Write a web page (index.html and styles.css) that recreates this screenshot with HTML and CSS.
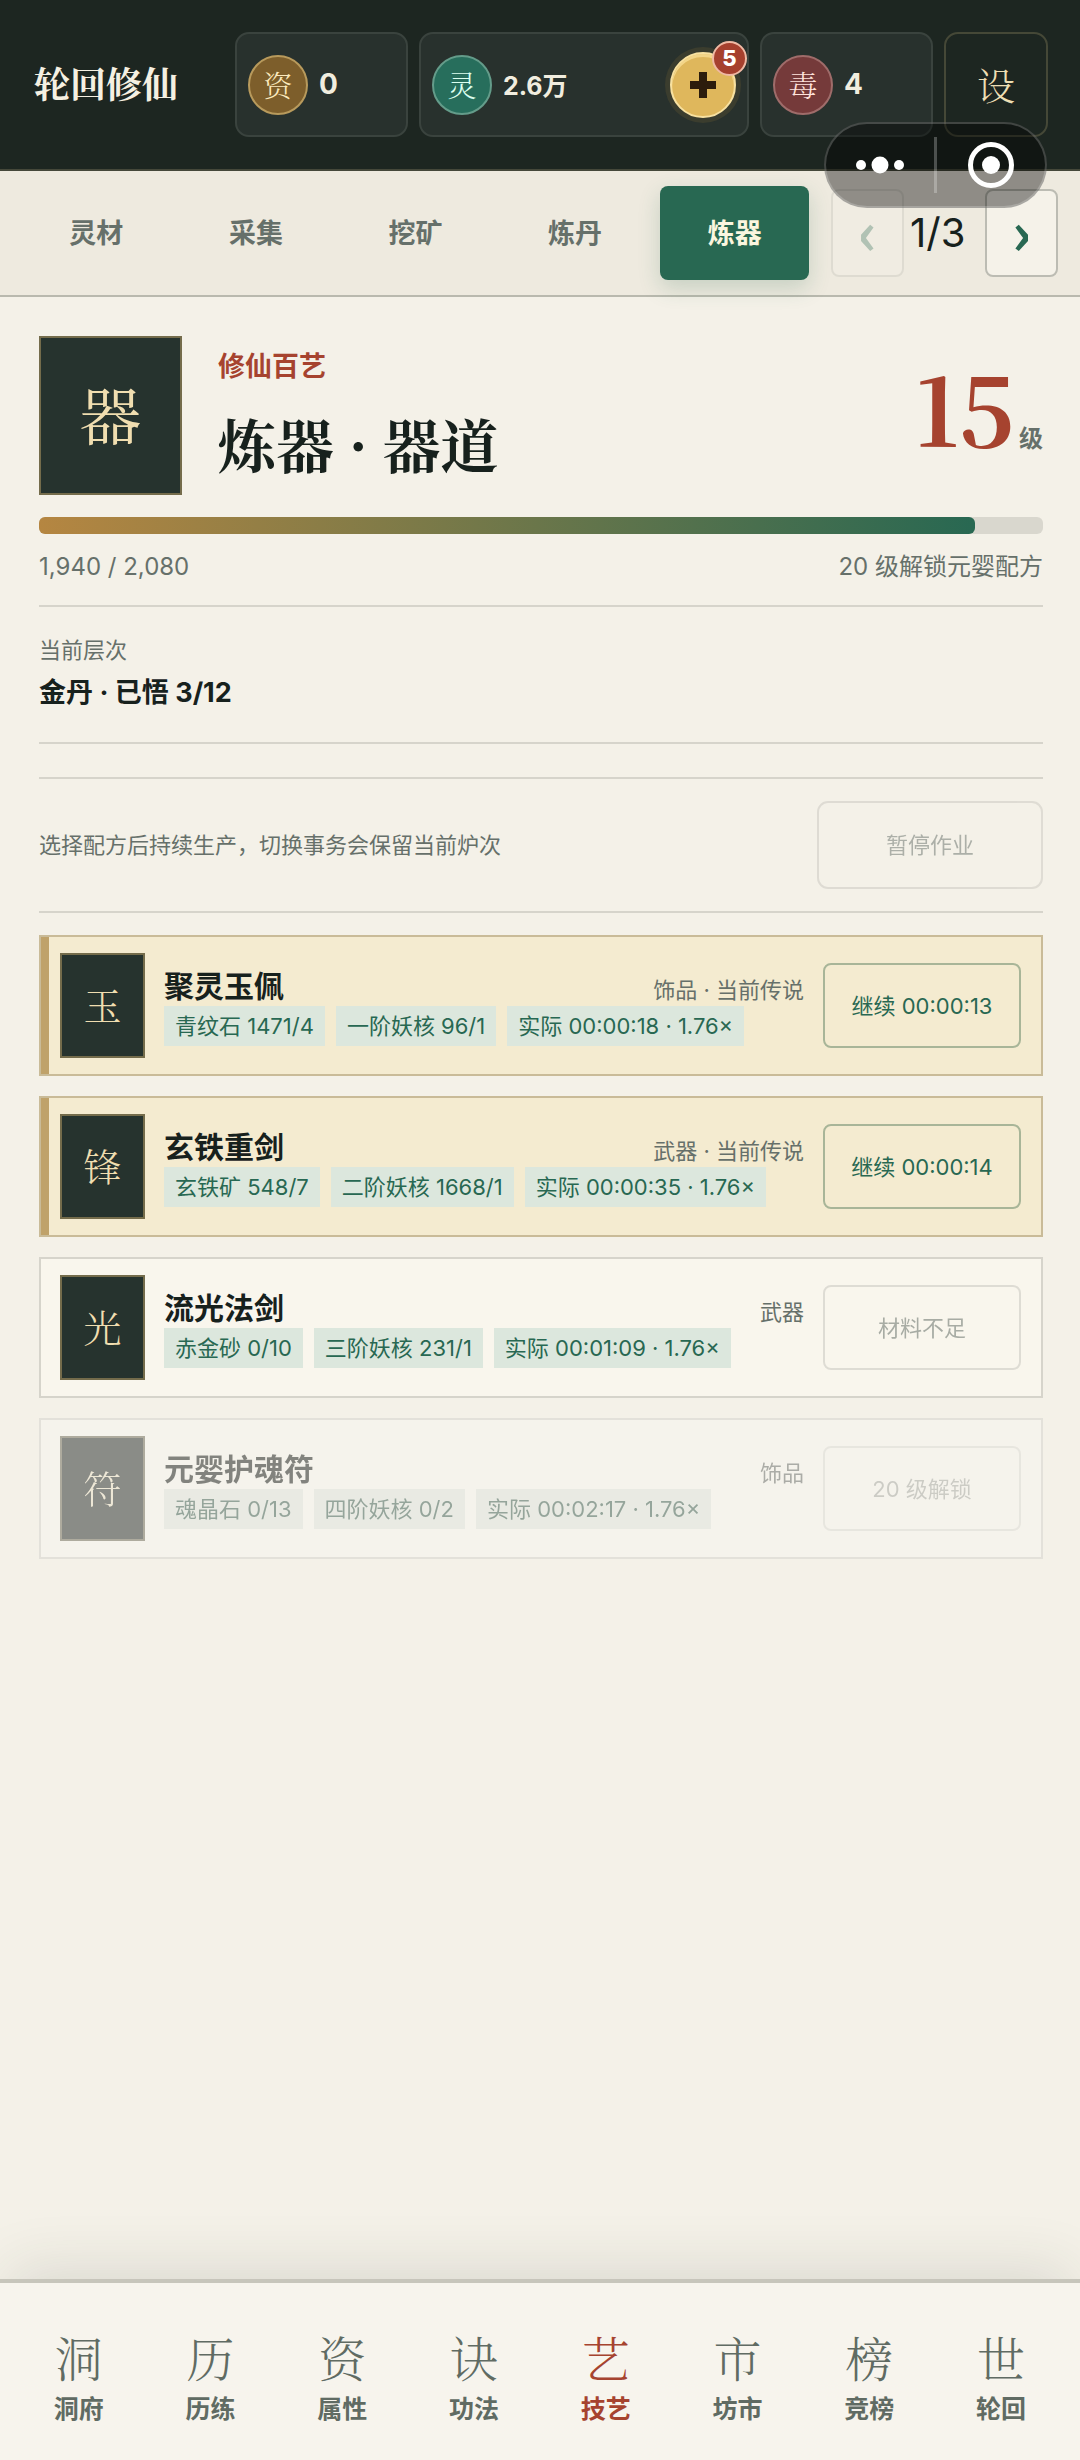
FILE: index.html
```html
<!DOCTYPE html>
<html lang="zh-CN">
<head>
  <meta charset="UTF-8">
  <meta name="viewport" content="width=device-width, initial-scale=1">
  <title>轮回修仙</title>
  <link rel="stylesheet" href="styles.css">
</head>
<body>
  <header class="topbar">
    <h1 class="brand">轮回修仙</h1>
    <div class="stat"><span class="coin gold">资</span><b>0</b></div>
    <div class="stat">
      <span class="coin jade">灵</span><b class="small">2.6万</b>
      <button class="add" aria-label="领取灵石">
        <svg viewBox="0 0 26 26" width="26" height="26"><path d="M9 0h8v9h9v8h-9v9H9v-9H0V9h9z" fill="#2c1c0c"/></svg>
        <span class="badge">5</span>
      </button>
    </div>
    <div class="stat"><span class="coin poison">毒</span><b>4</b></div>
    <button class="settings">设</button>
  </header>

  <nav class="tabs">
    <div class="tab-list">
      <button class="tab">灵材</button>
      <button class="tab">采集</button>
      <button class="tab">挖矿</button>
      <button class="tab">炼丹</button>
      <button class="tab active">炼器</button>
    </div>
    <div class="pager">
      <button class="arrow" aria-label="上一页" disabled>‹</button>
      <span class="page">1/3</span>
      <button class="arrow" aria-label="下一页">›</button>
    </div>
  </nav>

  <!-- mini program capsule -->
  <div class="capsule">
    <button aria-label="更多">
      <svg viewBox="0 0 48 18" width="48" height="18" fill="#fff"><circle cx="5" cy="9" r="5"/><circle cx="24" cy="9" r="8.5"/><circle cx="43" cy="9" r="5"/></svg>
    </button>
    <i class="split"></i>
    <button aria-label="关闭">
      <svg viewBox="0 0 46 46" width="46" height="46"><circle cx="23" cy="23" r="20.5" fill="none" stroke="#fff" stroke-width="5"/><circle cx="23" cy="23" r="9" fill="#fff"/></svg>
    </button>
  </div>

  <main class="content">
    <section class="hero">
      <div class="seal">器</div>
      <div class="hero-text">
        <p class="eyebrow">修仙百艺</p>
        <h2>炼器 · 器道</h2>
      </div>
      <p class="level"><strong>15</strong><span>级</span></p>
    </section>

    <div class="progress"><div class="progress-fill" style="width: 93.27%"></div></div>
    <div class="progress-meta"><span>1,940 / 2,080</span><span>20 级解锁元婴配方</span></div>

    <section class="stage">
      <span>当前层次</span>
      <strong>金丹 · 已悟 3/12</strong>
    </section>

    <section class="job">
      <p>选择配方后持续生产，切换事务会保留当前炉次</p>
      <button class="pause" disabled>暂停作业</button>
    </section>

    <section class="recipes">
      <article class="recipe current">
        <div class="glyph">玉</div>
        <div class="info">
          <div class="info-head"><h3>聚灵玉佩</h3><span>饰品 · 当前传说</span></div>
          <div class="chips"><span>青纹石 1471/4</span><span>一阶妖核 96/1</span><span>实际 00:00:18 · 1.76×</span></div>
        </div>
        <button class="action">继续 00:00:13</button>
      </article>

      <article class="recipe current">
        <div class="glyph">锋</div>
        <div class="info">
          <div class="info-head"><h3>玄铁重剑</h3><span>武器 · 当前传说</span></div>
          <div class="chips"><span>玄铁矿 548/7</span><span>二阶妖核 1668/1</span><span>实际 00:00:35 · 1.76×</span></div>
        </div>
        <button class="action">继续 00:00:14</button>
      </article>

      <article class="recipe">
        <div class="glyph">光</div>
        <div class="info">
          <div class="info-head"><h3>流光法剑</h3><span>武器</span></div>
          <div class="chips"><span>赤金砂 0/10</span><span>三阶妖核 231/1</span><span>实际 00:01:09 · 1.76×</span></div>
        </div>
        <button class="action" disabled>材料不足</button>
      </article>

      <article class="recipe locked">
        <div class="glyph">符</div>
        <div class="info">
          <div class="info-head"><h3>元婴护魂符</h3><span>饰品</span></div>
          <div class="chips"><span>魂晶石 0/13</span><span>四阶妖核 0/2</span><span>实际 00:02:17 · 1.76×</span></div>
        </div>
        <button class="action" disabled>20 级解锁</button>
      </article>
    </section>
  </main>

  <nav class="bottom-nav">
    <a href="#dongfu"><i>洞</i><span>洞府</span></a>
    <a href="#lilian"><i>历</i><span>历练</span></a>
    <a href="#shuxing"><i>资</i><span>属性</span></a>
    <a href="#gongfa"><i>诀</i><span>功法</span></a>
    <a href="#jiyi" class="active"><i>艺</i><span>技艺</span></a>
    <a href="#fangshi"><i>市</i><span>坊市</span></a>
    <a href="#jingbang"><i>榜</i><span>竞榜</span></a>
    <a href="#lunhui"><i>世</i><span>轮回</span></a>
  </nav>
</body>
</html>
```

FILE: styles.css
```css
:root {
  --ink: #17211d;
  --muted: #66706a;
  --green: #286852;
  --red: #a6432f;
  --line: #d6d4cb;
  --paper: #f4f1e8;
  --sans: Inter, "Noto Sans CJK SC", sans-serif;
  --serif: "Noto Serif CJK SC", "Songti SC", "Noto Sans CJK SC", serif;
}
* {
  box-sizing: border-box;
}
body {
  margin: 0;
  min-height: 100vh;
  display: flex;
  flex-direction: column;
  position: relative;
  background: var(--paper);
  color: var(--ink);
  font-family: var(--sans);
  font-size: 22px;
}
h1, h2, h3, p {
  margin: 0;
}
button {
  font: inherit;
  color: inherit;
  padding: 0;
  border: none;
  background: none;
}
i {
  font-style: normal;
}

/* top bar */
.topbar {
  display: grid;
  grid-template-columns: 190fr 173fr 330fr 173fr 104fr;
  gap: 11px;
  align-items: center;
  padding: 32px 32px 32px 34px;
  background: #1d2621;
  border-bottom: 2px solid #45483a;
}
.brand {
  padding-bottom: 4px;
  font-family: var(--serif);
  font-size: 36px;
  line-height: 48px;
  color: #f5f0e2;
  white-space: nowrap;
}
.stat {
  display: flex;
  align-items: center;
  gap: 11px;
  height: 105px;
  padding: 0 11px;
  background: #28312d;
  border: 2px solid #3a433e;
  border-radius: 14px;
  color: #f1eddf;
  font-size: 28px;
}
.stat b {
  padding-bottom: 2px;
}
.stat .small {
  font-size: 25px;
}
.coin {
  display: grid;
  place-items: center;
  width: 60px;
  height: 60px;
  border: 2px solid;
  border-radius: 50%;
  font-family: var(--serif);
  font-weight: 300;
  font-size: 29px;
  line-height: 56px;
}
.gold {
  background: #7d5e2b;
  border-color: #b89a5c;
  color: #fbe9bd;
}
.jade {
  background: #276e5c;
  border-color: #649c8a;
  color: #dcfff0;
}
.poison {
  background: #753a3a;
  border-color: #9f6c6a;
  color: #ffe3dc;
}
.add {
  position: relative;
  display: grid;
  place-items: center;
  width: 66px;
  height: 66px;
  margin-left: auto;
  border: 2px solid #f8e1a0;
  border-radius: 50%;
  background: #dfb75c;
  box-shadow: 0 0 0 5px #3b3d2e, inset 0 3px 0 #f3d588;
}
.badge {
  position: absolute;
  top: -13px;
  right: -13px;
  width: 35px;
  height: 35px;
  border: 2px solid #efb9a4;
  border-radius: 50%;
  background: #a6402e;
  color: #fff;
  font-size: 22px;
  font-weight: 800;
  line-height: 30px;
}
.settings {
  height: 105px;
  padding-bottom: 2px;
  border: 2px solid #454837;
  border-radius: 14px;
  color: #eedfb4;
  font-family: var(--serif);
  font-weight: 300;
  font-size: 38px;
}

/* tabs */
.tabs {
  display: flex;
  align-items: center;
  gap: 22px;
  padding: 15px 22px;
  background: #eeeadf;
  border-bottom: 2px solid #b9b9ae;
}
.tab-list {
  flex: 1;
  display: flex;
  gap: 11px;
}
.tab {
  flex: 1;
  height: 94px;
  padding-bottom: 4px;
  border-radius: 8px;
  color: var(--muted);
  font-size: 27px;
  font-weight: 700;
}
.tab.active {
  background: var(--green);
  color: #fbf6df;
  box-shadow: 0 8px 22px rgba(40, 104, 82, 0.2);
}
.pager {
  display: flex;
  align-items: center;
  gap: 6px;
}
.page {
  min-width: 69px;
  font-size: 40px;
  line-height: 48px;
}
.arrow {
  width: 73px;
  height: 88px;
  padding-bottom: 8px;
  border: 2px solid #bcbcb3;
  border-radius: 8px;
  background: #f5f2e9;
  color: var(--green);
  font-family: "Noto Sans CJK SC", sans-serif;
  font-size: 60px;
  font-weight: 700;
  line-height: 60px;
}
.arrow:disabled {
  opacity: 0.3;
}

.capsule {
  position: absolute;
  top: 122px;
  right: 33px;
  display: flex;
  align-items: center;
  width: 223px;
  height: 86px;
  border: 2px solid rgba(255, 255, 255, 0.2);
  border-radius: 43px;
  background: rgba(0, 0, 0, 0.4);
}
.capsule button {
  flex: 1;
  display: grid;
  place-items: center;
}
.split {
  width: 3px;
  height: 56px;
  background: rgba(255, 255, 255, 0.25);
}

/* skill header */
.content {
  padding: 39px 37px 39px 39px;
}
.hero {
  display: flex;
  align-items: center;
  gap: 36px;
}
.seal, .glyph {
  display: grid;
  place-items: center;
  padding-bottom: 4px;
  background: #26332e;
  border: 2px solid #746c4b;
  color: #f0deb0;
  font-family: var(--serif);
  font-weight: 300;
}
.seal {
  width: 143px;
  height: 159px;
  font-size: 62px;
  font-weight: 400;
}
.hero-text {
  flex: 1;
}
.eyebrow {
  color: var(--red);
  font-size: 27px;
  font-weight: 700;
  line-height: 40px;
}
.hero h2 {
  margin-top: 14px;
  font-family: var(--serif);
  font-size: 58px;
  line-height: 84px;
}
.level {
  display: flex;
  align-items: baseline;
  gap: 4px;
  padding-bottom: 18px;
  color: var(--muted);
  font-size: 24px;
  font-weight: 700;
}
.level strong {
  color: var(--red);
  font-family: var(--serif);
  font-size: 94px;
  font-weight: 700;
  line-height: 96px;
}
.progress {
  height: 17px;
  margin-top: 22px;
  border-radius: 6px;
  background: #d9d7ce;
}
.progress-fill {
  height: 100%;
  border-radius: 6px;
  background: linear-gradient(90deg, #b58641, #286852);
}
.progress-meta {
  display: flex;
  justify-content: space-between;
  padding: 15px 0 20px;
  border-bottom: 2px solid var(--line);
  color: var(--muted);
  font-size: 24px;
  line-height: 36px;
}
.stage {
  display: flex;
  flex-direction: column;
  gap: 5px;
  padding: 25px 0 29px;
  border-bottom: 2px solid var(--line);
}
.stage span {
  color: var(--muted);
  line-height: 36px;
}
.stage strong {
  font-size: 27px;
  line-height: 40px;
}
.job {
  display: flex;
  align-items: center;
  justify-content: space-between;
  margin-top: 33px;
  padding: 22px 0;
  border: solid var(--line);
  border-width: 2px 0;
  color: var(--muted);
}
.job p {
  padding-bottom: 4px;
}
.pause {
  width: 226px;
  height: 88px;
  padding-bottom: 4px;
  border: 2px solid #c9c7c0;
  border-radius: 11px;
}
.pause:disabled {
  opacity: 0.5;
}

/* recipes */
.recipes {
  display: flex;
  flex-direction: column;
  gap: 20px;
  margin-top: 22px;
}
.recipe {
  display: flex;
  align-items: center;
  gap: 19px;
  padding: 16px 20px 16px 19px;
  border: 2px solid var(--line);
  background: #f9f6ed;
}
.recipe.current {
  background: #f4ebd0;
  border-color: #c9bb98;
  box-shadow: inset 8px 0 0 #bfa26a;
}
.recipe.locked {
  opacity: 0.52;
  filter: grayscale(0.5);
}
.glyph {
  width: 85px;
  height: 105px;
  font-size: 38px;
}
.info {
  flex: 1;
}
.info-head {
  display: flex;
  align-items: center;
  justify-content: space-between;
  height: 40px;
}
.info-head h3 {
  font-size: 30px;
  line-height: 40px;
}
.info-head span {
  color: var(--muted);
  line-height: 32px;
  align-self: flex-end;
}
.chips {
  display: flex;
  gap: 11px;
}
.chips span {
  padding: 0 11px;
  background: #dce7dd;
  color: var(--green);
  line-height: 40px;
  white-space: nowrap;
}
.action {
  width: 198px;
  height: 85px;
  padding-bottom: 4px;
  border: 2px solid #a8b598;
  border-radius: 8px;
  color: var(--green);
}
.action:disabled {
  border-color: #c9c7c0;
  color: var(--muted);
  opacity: 0.55;
}

/* bottom nav */
.bottom-nav {
  display: flex;
  margin-top: auto;
  padding: 42px 13px 31px;
  border-top: 4px solid #c7c5bb;
  background: #f7f4ed;
  box-shadow: 0 -20px 60px -10px rgba(40, 50, 40, 0.12);
}
.bottom-nav a {
  flex: 1;
  display: flex;
  flex-direction: column;
  align-items: center;
  color: #606b63;
  text-decoration: none;
}
.bottom-nav i {
  font-family: var(--serif);
  font-weight: 300;
  font-size: 48px;
  line-height: 64px;
}
.bottom-nav span {
  font-size: 25px;
  font-weight: 700;
  line-height: 40px;
}
.bottom-nav a.active {
  color: var(--red);
}
```
